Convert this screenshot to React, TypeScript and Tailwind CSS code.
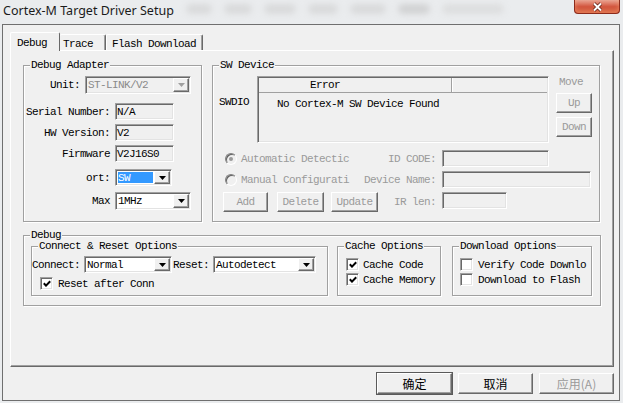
import React from "react";

const raised =
  "border border-t-white border-l-white border-r-[#696969] border-b-[#696969] shadow-[inset_-1px_-1px_0_#a0a0a0]";
const sunken =
  "border border-t-[#a0a0a0] border-l-[#a0a0a0] border-r-white border-b-white shadow-[inset_1px_1px_0_#696969,inset_-1px_-1px_0_#e3e3e3]";
const dim = "text-[#9a9a9a]";

function Arrow({ disabled }: { disabled?: boolean }) {
  return (
    <svg width="7" height="4" viewBox="0 0 7 4">
      <path d="M0 0h7L3.5 4z" fill={disabled ? "#a0a0a0" : "#000"} />
    </svg>
  );
}

function GroupBox({ title, className = "", children }: { title: string; className?: string; children?: React.ReactNode }) {
  return (
    <div className={`relative shrink-0 border border-[#a0a0a0] shadow-[1px_1px_0_#fff,inset_1px_1px_0_#fff] ${className}`}>
      <span className="absolute left-[6px] top-[-7px] whitespace-nowrap bg-[#f0f0f0] px-[1px]">{title}</span>
      {children}
    </div>
  );
}

function Field({ w, h = "h-[17px]", children }: { w: string; h?: string; children?: React.ReactNode }) {
  return <div className={`${w} ${h} ${sunken} flex shrink-0 items-center bg-[#f0f0f0] pl-[1px]`}>{children}</div>;
}

function Combo({
  w,
  h = "h-[17px]",
  value,
  disabled,
  selected,
}: {
  w: string;
  h?: string;
  value: string;
  disabled?: boolean;
  selected?: boolean;
}) {
  return (
    <div className={`${w} ${h} ${sunken} flex shrink-0 p-[1px] ${disabled ? "bg-[#f0f0f0]" : "bg-white"}`}>
      <div
        className={`flex flex-1 items-center whitespace-nowrap ${
          selected ? "m-[1px] bg-[#3399ff] text-white" : "pl-[1px]"
        } ${disabled ? "text-[#8a8a8a]" : ""}`}
      >
        {value}
      </div>
      <div className={`w-[16px] ${raised} flex items-center justify-center bg-[#f0f0f0]`}>
        <Arrow disabled={disabled} />
      </div>
    </div>
  );
}

function Btn({
  w,
  h = "h-[20px]",
  disabled,
  className = "",
  children,
}: {
  w: string;
  h?: string;
  disabled?: boolean;
  className?: string;
  children: React.ReactNode;
}) {
  return (
    <div className={`${w} ${h} ${raised} flex shrink-0 items-center justify-center bg-[#f0f0f0] ${disabled ? dim : ""} ${className}`}>
      {children}
    </div>
  );
}

function Check({ checked }: { checked?: boolean }) {
  return (
    <div className={`h-[13px] w-[13px] ${sunken} flex shrink-0 items-center justify-center bg-white`}>
      {checked && (
        <svg width="8" height="7" viewBox="0 0 8 7">
          <path d="M0.8 3.2 3 5.6 7.2 1.2" fill="none" stroke="#000" strokeWidth="2" />
        </svg>
      )}
    </div>
  );
}

function Radio({ checked }: { checked?: boolean }) {
  return (
    <div className="flex h-[12px] w-[12px] shrink-0 items-center justify-center rounded-full border border-t-[#808080] border-l-[#808080] border-r-white border-b-white bg-[#f0f0f0] shadow-[inset_1px_1px_0_#606060]">
      {checked && <div className="h-[4px] w-[4px] rounded-full bg-[#9a9a9a]" />}
    </div>
  );
}

function Label({ w, children, className = "" }: { w: string; children: React.ReactNode; className?: string }) {
  return <div className={`${w} shrink-0 whitespace-nowrap text-right ${className}`}>{children}</div>;
}

function TitleBar() {
  return (
    <div className="flex h-[24px] shrink-0 items-start justify-between">
      <div className="flex items-start">
        <span className="mt-[3px] pl-[1px] font-['Noto_Sans',sans-serif] text-[12.5px] leading-[16px] tracking-[0px] text-[#1b1b1b]">
          Cortex-M Target Driver Setup
        </span>
        <div aria-hidden className="ml-[12px] mt-[4px] flex gap-[12px] opacity-50">
          <div className="h-[10px] w-[26px] rounded-full bg-[#c8c8c8] blur-[3px]" />
          <div className="h-[10px] w-[28px] rounded-full bg-[#c8c8c8] blur-[3px]" />
          <div className="h-[10px] w-[32px] rounded-full bg-[#c8c8c8] blur-[3px]" />
          <div className="h-[10px] w-[30px] rounded-full bg-[#c8c8c8] blur-[3px]" />
          <div className="h-[10px] w-[36px] rounded-full bg-[#c8c8c8] blur-[3px]" />
          <div className="h-[10px] w-[32px] rounded-full bg-[#b8b8b8] blur-[3px]" />
          <div className="h-[10px] w-[62px] rounded-full bg-[#d0d0d0] blur-[3px]" />
        </div>
      </div>
      <div className="flex h-[14px] w-[46px] items-center justify-center rounded-b-[4px] border border-t-0 border-[#8c2b1c] bg-gradient-to-b from-[#e9a594] via-[#d2563f] to-[#c2432b] shadow-[inset_0_-3px_4px_rgba(255,170,120,0.55)]">
        <svg width="11" height="10" viewBox="0 0 11 10">
          <path d="M2 1.5 9 8.5M9 1.5 2 8.5" stroke="#5a1a10" strokeWidth="3.4" />
          <path d="M2 1.5 9 8.5M9 1.5 2 8.5" stroke="#fff" strokeWidth="2" />
        </svg>
      </div>
    </div>
  );
}

function DebugAdapter() {
  return (
    <GroupBox title="Debug Adapter" className="h-[157px] w-[179px]">
      <div className="flex flex-col pt-[10px]">
        <div className="flex h-[18px] items-center">
          <Label w="w-[56px]">Unit:</Label>
          <div className="ml-[5px]">
            <Combo w="w-[106px]" h="h-[18px]" value="ST-LINK/V2" disabled />
          </div>
        </div>
        <div className="mt-[9px] flex h-[17px] items-center">
          <Label w="w-[86px]">Serial Number:</Label>
          <div className="ml-[5px]">
            <Field w="w-[59px]">N/A</Field>
          </div>
        </div>
        <div className="mt-[4px] flex h-[17px] items-center">
          <Label w="w-[86px]">HW Version:</Label>
          <div className="ml-[5px]">
            <Field w="w-[59px]">V2</Field>
          </div>
        </div>
        <div className="mt-[4px] flex h-[17px] items-center">
          <Label w="w-[86px]">Firmware</Label>
          <div className="ml-[5px]">
            <Field w="w-[59px]">V2J16S0</Field>
          </div>
        </div>
        <div className="mt-[7px] flex h-[17px] items-center">
          <Label w="w-[86px]">ort:</Label>
          <div className="ml-[5px]">
            <Combo w="w-[57px]" value="SW" selected />
          </div>
        </div>
        <div className="mt-[6px] flex h-[18px] items-center">
          <Label w="w-[86px]">Max</Label>
          <div className="ml-[5px]">
            <Combo w="w-[76px]" h="h-[18px]" value="1MHz" />
          </div>
        </div>
      </div>
    </GroupBox>
  );
}

function SWDevice() {
  return (
    <GroupBox title="SW Device" className="h-[157px] w-[388px]">
      <div className="flex flex-col pt-[10px]">
        <div className="flex items-start">
          <div className="mt-[20px] w-[44px] shrink-0 pl-[6px]">SWDIO</div>
          <div className={`h-[67px] w-[292px] shrink-0 ${sunken} bg-[#f0f0f0] p-[1px]`}>
            <div className="flex h-[15px] border-b border-[#a0a0a0]">
              <div className="flex w-[193px] items-center border-r border-[#a0a0a0] pl-[51px] shadow-[1px_0_0_#fff]">Error</div>
              <div className="flex-1" />
            </div>
            <div className="mt-[5px] whitespace-nowrap pl-[18px]">No Cortex-M SW Device Found</div>
          </div>
          <div className="ml-[7px] flex w-[36px] shrink-0 flex-col">
            <div className={`pl-[3px] ${dim}`}>Move</div>
            <Btn w="w-[36px]" disabled className="mt-[5px]">
              Up
            </Btn>
            <Btn w="w-[36px]" disabled className="mt-[4px]">
              Down
            </Btn>
          </div>
        </div>

        <div className="mt-[7px] flex h-[17px] items-center">
          <div className="flex w-[150px] shrink-0 items-center pl-[12px]">
            <Radio checked />
            <span className={`ml-[4px] whitespace-nowrap ${dim}`}>Automatic Detectic</span>
          </div>
          <Label w="w-[73px]" className={dim}>
            ID CODE:
          </Label>
          <div className="ml-[6px]">
            <Field w="w-[107px]" />
          </div>
        </div>
        <div className="mt-[4px] flex h-[17px] items-center">
          <div className="flex w-[150px] shrink-0 items-center pl-[12px]">
            <Radio />
            <span className={`ml-[4px] whitespace-nowrap ${dim}`}>Manual Configurati</span>
          </div>
          <Label w="w-[73px]" className={dim}>
            Device Name:
          </Label>
          <div className="ml-[6px]">
            <Field w="w-[149px]" />
          </div>
        </div>
        <div className="mt-[4px] flex items-start">
          <div className="flex w-[223px] shrink-0 items-start pl-[10px]">
            <Btn w="w-[45px]" disabled>
              Add
            </Btn>
            <Btn w="w-[47px]" disabled className="ml-[9px]">
              Delete
            </Btn>
            <Btn w="w-[47px]" disabled className="ml-[7px]">
              Update
            </Btn>
            <div className={`ml-auto flex h-[20px] items-center whitespace-nowrap ${dim}`}>IR len:</div>
          </div>
          <div className="ml-[6px]">
            <Field w="w-[65px]" />
          </div>
        </div>
      </div>
    </GroupBox>
  );
}

function DebugOptions() {
  return (
    <GroupBox title="Debug" className="mt-[13px] h-[71px] w-[578px]">
      <div className="flex pl-[7px] pt-[10px]">
        <GroupBox title="Connect & Reset Options" className="h-[50px] w-[297px]">
          <div className="mt-[9px] flex h-[17px] items-center">
            <Label w="w-[48px]">Connect:</Label>
            <div className="ml-[4px]">
              <Combo w="w-[88px]" value="Normal" />
            </div>
            <Label w="w-[36px]" className="ml-[1px]">
              Reset:
            </Label>
            <div className="ml-[4px]">
              <Combo w="w-[103px]" value="Autodetect" />
            </div>
          </div>
          <div className="mt-[4px] flex items-center pl-[8px]">
            <Check checked />
            <span className="ml-[5px] whitespace-nowrap">Reset after Conn</span>
          </div>
        </GroupBox>
        <GroupBox title="Cache Options" className="ml-[9px] h-[50px] w-[104px]">
          <div className="mt-[11px] flex items-center pl-[8px]">
            <Check checked />
            <span className="ml-[4px] whitespace-nowrap">Cache Code</span>
          </div>
          <div className="mt-[2px] flex items-center pl-[8px]">
            <Check checked />
            <span className="ml-[4px] whitespace-nowrap">Cache Memory</span>
          </div>
        </GroupBox>
        <GroupBox title="Download Options" className="ml-[11px] h-[50px] w-[140px]">
          <div className="mt-[11px] flex items-center pl-[7px]">
            <Check />
            <span className="ml-[5px] whitespace-nowrap">Verify Code Downlo</span>
          </div>
          <div className="mt-[2px] flex items-center pl-[7px]">
            <Check />
            <span className="ml-[5px] whitespace-nowrap">Download to Flash</span>
          </div>
        </GroupBox>
      </div>
    </GroupBox>
  );
}

export default function App() {
  return (
    <div className="flex h-[403px] w-[623px] flex-col overflow-hidden bg-[#eaecee] pl-[2px] pr-[3px] font-['Liberation_Mono','Courier_New',monospace] text-[11px] leading-[12px] tracking-[-0.6px] text-black">
      <TitleBar />
      <div className="flex h-[377px] shrink-0 flex-col border border-[#6f6f6f] bg-[#f0f0f0] pl-[7px] pr-[5px] pt-[7px]">
        {/* tabs */}
        <div className="flex h-[18px] items-end">
          <div className="relative z-10 -mb-px h-[19px] w-[50px] rounded-t-[2px] border-l border-r border-t border-l-white border-r-[#696969] border-t-white bg-[#f0f0f0] pl-[6px] pt-[4px]">
            Debug
          </div>
          <div className="h-[16px] w-[46px] rounded-t-[2px] border-r border-t border-r-[#696969] border-t-white shadow-[inset_-1px_0_0_#a0a0a0] pl-[3px] pt-[3px]">
            Trace
          </div>
          <div className="h-[16px] w-[97px] whitespace-nowrap rounded-t-[2px] border-l border-r border-t border-l-white border-r-[#696969] border-t-white shadow-[inset_-1px_0_0_#a0a0a0] pl-[5px] pt-[3px]">
            Flash Download
          </div>
        </div>

        {/* tab page */}
        <div className="h-[317px] w-[604px] shrink-0 border border-b-[#696969] border-l-white border-r-[#696969] border-t-white bg-[#f0f0f0] pl-[12px] pt-[14px] shadow-[inset_-1px_-1px_0_#a0a0a0]">
          <div className="flex gap-[10px]">
            <DebugAdapter />
            <SWDevice />
          </div>
          <DebugOptions />
        </div>

        {/* dialog buttons */}
        <div className="mt-[6px] flex justify-end gap-[6px] font-['Noto_Sans_CJK_SC','Noto_Sans',sans-serif] text-[12px] tracking-[0px]">
          <Btn w="w-[75px]" h="h-[21px]" className="outline outline-1 outline-[#5a5a5a]">
            确定
          </Btn>
          <Btn w="w-[75px]" h="h-[21px]">
            取消
          </Btn>
          <Btn w="w-[75px]" h="h-[21px]" disabled>
            应用(A)
          </Btn>
        </div>
      </div>
    </div>
  );
}
